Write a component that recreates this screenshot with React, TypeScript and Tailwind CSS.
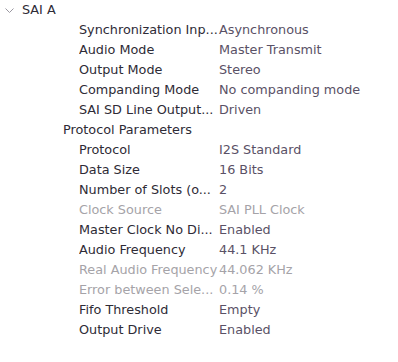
const rows: { k: string; v: string; dim?: boolean }[] = [
  { k: "Synchronization Inp...", v: "Asynchronous" },
  { k: "Audio Mode", v: "Master Transmit" },
  { k: "Output Mode", v: "Stereo" },
  { k: "Companding Mode", v: "No companding mode" },
  { k: "SAI SD Line Output...", v: "Driven" },
];

const protocol: { k: string; v: string; dim?: boolean }[] = [
  { k: "Protocol", v: "I2S Standard" },
  { k: "Data Size", v: "16 Bits" },
  { k: "Number of Slots (o...", v: "2" },
  { k: "Clock Source", v: "SAI PLL Clock", dim: true },
  { k: "Master Clock No Di...", v: "Enabled" },
  { k: "Audio Frequency", v: "44.1 KHz" },
  { k: "Real Audio Frequency", v: "44.062 KHz", dim: true },
  { k: "Error between Sele...", v: "0.14 %", dim: true },
  { k: "Fifo Threshold", v: "Empty" },
  { k: "Output Drive", v: "Enabled" },
];

function Row({ k, v, dim }: { k: string; v: string; dim?: boolean }) {
  return (
    <div className="flex h-5 items-center pl-[79px]">
      <div
        className={`w-[140px] shrink-0 overflow-hidden whitespace-nowrap ${
          dim ? "text-[#a5a3a8]" : "text-[#2e2b36]"
        }`}
      >
        {k}
      </div>
      <div className={`whitespace-nowrap ${dim ? "text-[#a5a3a8]" : "text-[#5a5166]"}`}>{v}</div>
    </div>
  );
}

export default function App() {
  return (
    <div
      className="h-[362px] w-[398px] overflow-hidden bg-white text-[12.8px] leading-5"
      style={{ fontFamily: '"DejaVu Sans", Verdana, sans-serif' }}
    >
      <div className="flex h-5 items-center">
        <svg className="ml-[5px] mr-[8px] h-[5px] w-[9px]" viewBox="0 0 9 5" fill="none">
          <path d="M0.5 0.5 L4.5 4.5 L8.5 0.5" stroke="#9a97a0" strokeWidth="1" />
        </svg>
        <span className="text-[#2e2b36]">SAI A</span>
      </div>
      {rows.map((r) => (
        <Row key={r.k} {...r} />
      ))}
      <div className="flex h-5 items-center pl-[63px] text-[#2e2b36]">Protocol Parameters</div>
      {protocol.map((r) => (
        <Row key={r.k} {...r} />
      ))}
    </div>
  );
}
